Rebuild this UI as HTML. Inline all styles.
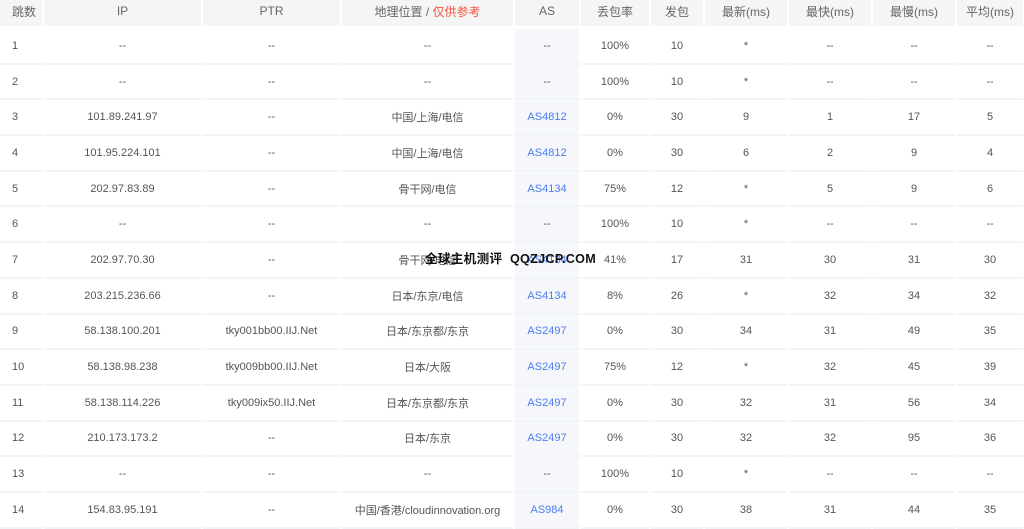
<!DOCTYPE html>
<html><head><meta charset="utf-8"><style>
body{margin:0;width:1024px;height:521px;overflow:hidden;background:#fff;font-family:"Liberation Sans","Noto Sans CJK SC",sans-serif;position:relative}
.g{display:grid;grid-template-columns:43px 159px 139px 173px 66px 70px 54px 84px 84px 84px 68px;grid-template-rows:29px repeat(14,35.7px)}
.g div{box-sizing:border-box;margin:0 1px;display:flex;align-items:center;justify-content:center;font-size:11px;color:#555;border-bottom:2px solid #f0f3f7}
.g .h{background:#f5f5f5;color:#666;font-size:12px;border-bottom:3px solid #fff;padding-bottom:4px}
.g .f{justify-content:flex-start;padding-left:12px;margin-left:0}
.g .a{background:#f6f7fa;color:#4b7cf3}
.r{color:#f5533d}
.wm{position:absolute;left:425px;top:248px;font-size:12.6px;font-weight:bold;color:#111;letter-spacing:0.3px}
</style></head><body>
<div class="g">
<div class="h f">跳数</div><div class="h">IP</div><div class="h">PTR</div><div class="h">地理位置 /&nbsp;<span class="r">仅供参考</span></div><div class="h">AS</div><div class="h">丢包率</div><div class="h">发包</div><div class="h">最新(ms)</div><div class="h">最快(ms)</div><div class="h">最慢(ms)</div><div class="h">平均(ms)</div>

<div class="f">1</div><div>--</div><div>--</div><div>--</div><div class="a" style="color:#555">--</div><div>100%</div><div>10</div><div>*</div><div>--</div><div>--</div><div>--</div>
<div class="f">2</div><div>--</div><div>--</div><div>--</div><div class="a" style="color:#555">--</div><div>100%</div><div>10</div><div>*</div><div>--</div><div>--</div><div>--</div>
<div class="f">3</div><div>101.89.241.97</div><div>--</div><div>中国/上海/电信</div><div class="a">AS4812</div><div>0%</div><div>30</div><div>9</div><div>1</div><div>17</div><div>5</div>
<div class="f">4</div><div>101.95.224.101</div><div>--</div><div>中国/上海/电信</div><div class="a">AS4812</div><div>0%</div><div>30</div><div>6</div><div>2</div><div>9</div><div>4</div>
<div class="f">5</div><div>202.97.83.89</div><div>--</div><div>骨干网/电信</div><div class="a">AS4134</div><div>75%</div><div>12</div><div>*</div><div>5</div><div>9</div><div>6</div>
<div class="f">6</div><div>--</div><div>--</div><div>--</div><div class="a" style="color:#555">--</div><div>100%</div><div>10</div><div>*</div><div>--</div><div>--</div><div>--</div>
<div class="f">7</div><div>202.97.70.30</div><div>--</div><div>骨干网/电信</div><div class="a">AS4134</div><div>41%</div><div>17</div><div>31</div><div>30</div><div>31</div><div>30</div>
<div class="f">8</div><div>203.215.236.66</div><div>--</div><div>日本/东京/电信</div><div class="a">AS4134</div><div>8%</div><div>26</div><div>*</div><div>32</div><div>34</div><div>32</div>
<div class="f">9</div><div>58.138.100.201</div><div>tky001bb00.IIJ.Net</div><div>日本/东京都/东京</div><div class="a">AS2497</div><div>0%</div><div>30</div><div>34</div><div>31</div><div>49</div><div>35</div>
<div class="f">10</div><div>58.138.98.238</div><div>tky009bb00.IIJ.Net</div><div>日本/大阪</div><div class="a">AS2497</div><div>75%</div><div>12</div><div>*</div><div>32</div><div>45</div><div>39</div>
<div class="f">11</div><div>58.138.114.226</div><div>tky009ix50.IIJ.Net</div><div>日本/东京都/东京</div><div class="a">AS2497</div><div>0%</div><div>30</div><div>32</div><div>31</div><div>56</div><div>34</div>
<div class="f">12</div><div>210.173.173.2</div><div>--</div><div>日本/东京</div><div class="a">AS2497</div><div>0%</div><div>30</div><div>32</div><div>32</div><div>95</div><div>36</div>
<div class="f">13</div><div>--</div><div>--</div><div>--</div><div class="a" style="color:#555">--</div><div>100%</div><div>10</div><div>*</div><div>--</div><div>--</div><div>--</div>
<div class="f">14</div><div>154.83.95.191</div><div>--</div><div>中国/香港/cloudinnovation.org</div><div class="a">AS984</div><div>0%</div><div>30</div><div>38</div><div>31</div><div>44</div><div>35</div>
</div>
<div class="wm">全球主机测评&nbsp; QQZJCP.COM</div>
</body></html>
